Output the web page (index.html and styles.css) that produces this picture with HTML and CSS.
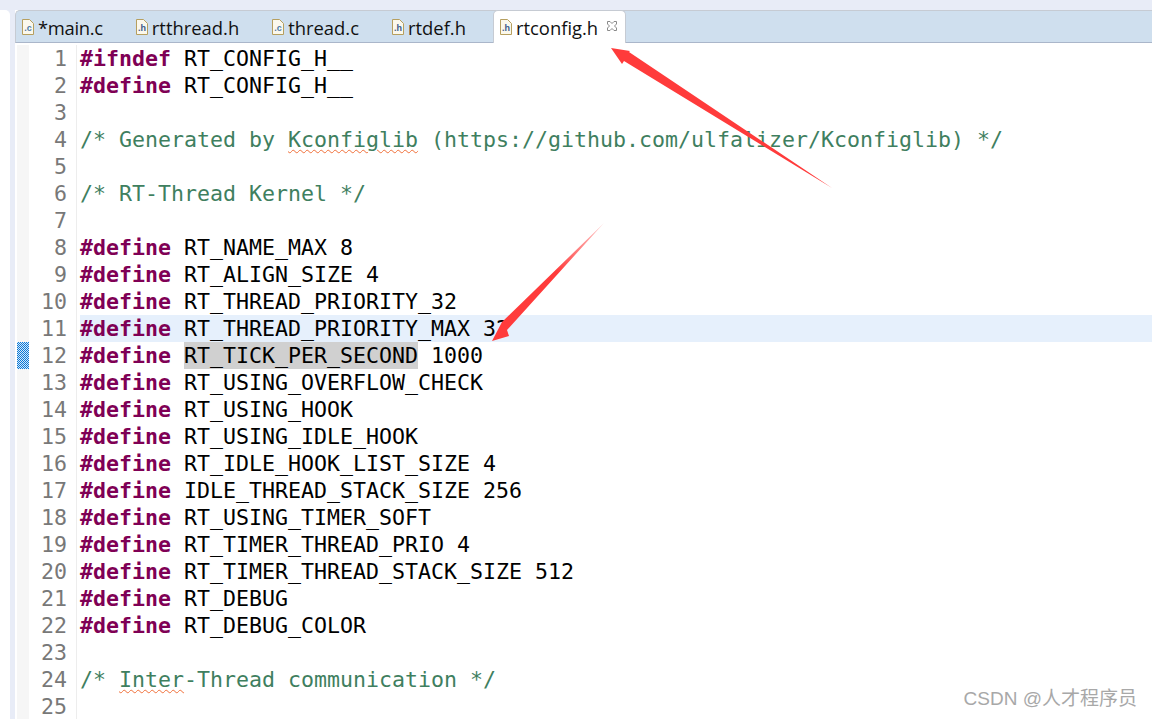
FILE: index.html
```html
<!DOCTYPE html>
<html lang="en">
<head>
<meta charset="utf-8">
<title>rtconfig.h</title>
<link rel="stylesheet" href="styles.css">
</head>
<body>
<div class="window">
  <div class="topstrip"></div>
  <div class="workspace">
    <div class="sidepane"></div>
    <div class="editor">
      <div class="tabbar">
        <div class="tab"><svg class="fileicon" viewBox="0 0 12 16"><path class="page" d="M.5.5h7l4 4v11H.5z"/><text class="c" x="6" y="12">.c</text></svg><span class="tight">*main.c</span></div>
        <div class="tab"><svg class="fileicon" viewBox="0 0 12 16"><path class="page" d="M.5.5h7l4 4v11H.5z"/><text class="h" x="6" y="12">.h</text></svg><span>rtthread.h</span></div>
        <div class="tab"><svg class="fileicon" viewBox="0 0 12 16"><path class="page" d="M.5.5h7l4 4v11H.5z"/><text class="c" x="6" y="12">.c</text></svg><span>thread.c</span></div>
        <div class="tab"><svg class="fileicon" viewBox="0 0 12 16"><path class="page" d="M.5.5h7l4 4v11H.5z"/><text class="h" x="6" y="12">.h</text></svg><span>rtdef.h</span></div>
        <div class="tab active"><svg class="fileicon" viewBox="0 0 12 16"><path class="page" d="M.5.5h7l4 4v11H.5z"/><text class="h" x="6" y="12">.h</text></svg><span>rtconfig.h</span><svg class="close" viewBox="0 0 12 12"><path d="M1.5 1.5h2.500l2 2 2-2h2.500v2.500l-2 2 2 2v2.500h-2.500l-2-2-2 2H1.500V8l2-2-2-2z"/></svg></div>
      </div>
      <div class="code">
        <div class="row"><span class="mark"></span><span class="ln">1</span><span class="src"><b>#ifndef</b> RT_CONFIG_H__</span></div>
        <div class="row"><span class="mark"></span><span class="ln">2</span><span class="src"><b>#define</b> RT_CONFIG_H__</span></div>
        <div class="row"><span class="mark"></span><span class="ln">3</span><span class="src"></span></div>
        <div class="row"><span class="mark"></span><span class="ln">4</span><span class="src"><i>/* Generated by <u class="spell">Kconfiglib</u> (https://github.com/ulfalizer/Kconfiglib) */</i></span></div>
        <div class="row"><span class="mark"></span><span class="ln">5</span><span class="src"></span></div>
        <div class="row"><span class="mark"></span><span class="ln">6</span><span class="src"><i>/* RT-Thread Kernel */</i></span></div>
        <div class="row"><span class="mark"></span><span class="ln">7</span><span class="src"></span></div>
        <div class="row"><span class="mark"></span><span class="ln">8</span><span class="src"><b>#define</b> RT_NAME_MAX 8</span></div>
        <div class="row"><span class="mark"></span><span class="ln">9</span><span class="src"><b>#define</b> RT_ALIGN_SIZE 4</span></div>
        <div class="row"><span class="mark"></span><span class="ln">10</span><span class="src"><b>#define</b> RT_THREAD_PRIORITY_32</span></div>
        <div class="row"><span class="mark"></span><span class="ln">11</span><span class="src current"><b>#define</b> RT_THREAD_PRIORITY_MAX 32</span></div>
        <div class="row"><span class="mark hit"></span><span class="ln">12</span><span class="src"><b>#define</b> <span class="sel">RT_TICK_PER_SECOND</span> 1000</span></div>
        <div class="row"><span class="mark"></span><span class="ln">13</span><span class="src"><b>#define</b> RT_USING_OVERFLOW_CHECK</span></div>
        <div class="row"><span class="mark"></span><span class="ln">14</span><span class="src"><b>#define</b> RT_USING_HOOK</span></div>
        <div class="row"><span class="mark"></span><span class="ln">15</span><span class="src"><b>#define</b> RT_USING_IDLE_HOOK</span></div>
        <div class="row"><span class="mark"></span><span class="ln">16</span><span class="src"><b>#define</b> RT_IDLE_HOOK_LIST_SIZE 4</span></div>
        <div class="row"><span class="mark"></span><span class="ln">17</span><span class="src"><b>#define</b> IDLE_THREAD_STACK_SIZE 256</span></div>
        <div class="row"><span class="mark"></span><span class="ln">18</span><span class="src"><b>#define</b> RT_USING_TIMER_SOFT</span></div>
        <div class="row"><span class="mark"></span><span class="ln">19</span><span class="src"><b>#define</b> RT_TIMER_THREAD_PRIO 4</span></div>
        <div class="row"><span class="mark"></span><span class="ln">20</span><span class="src"><b>#define</b> RT_TIMER_THREAD_STACK_SIZE 512</span></div>
        <div class="row"><span class="mark"></span><span class="ln">21</span><span class="src"><b>#define</b> RT_DEBUG</span></div>
        <div class="row"><span class="mark"></span><span class="ln">22</span><span class="src"><b>#define</b> RT_DEBUG_COLOR</span></div>
        <div class="row"><span class="mark"></span><span class="ln">23</span><span class="src"></span></div>
        <div class="row"><span class="mark"></span><span class="ln">24</span><span class="src"><i>/* <u class="spell">Inter</u>-Thread communication */</i></span></div>
        <div class="row"><span class="mark"></span><span class="ln">25</span><span class="src"></span></div>
      </div>
    </div>
  </div>
  <svg class="arrows" viewBox="0 0 1152 719">
    <defs>
      <linearGradient id="fade" x1="604" y1="223" x2="560" y2="275" gradientUnits="userSpaceOnUse">
        <stop offset="0" stop-color="#ff3b3b" stop-opacity=".25"/>
        <stop offset="1" stop-color="#ff3b3b"/>
      </linearGradient>
    </defs>
    <path class="arrow" d="M611 48L630 51L629 52L832 188L624 61L622 64Z"/>
    <path class="arrow2" d="M492 341L509 336L507 330L604 223L502 322Z"/>
  </svg>
  <div class="watermark">CSDN @人才程序员</div>
</div>
</body>
</html>
```
FILE: styles.css
```css
* { box-sizing: border-box; }
html, body { margin: 0; padding: 0; width: 1152px; height: 719px; overflow: hidden; background: #fff; }
.window { position: relative; width: 1152px; height: 719px; display: flex; flex-direction: column; background: #e8ecf7; overflow: hidden; }
.topstrip { height: 10px; flex: none; }
.workspace { flex: 1; display: flex; min-height: 0; }
.sidepane { width: 10px; flex: none; background: #fff; border-top-right-radius: 5px; }
.editor { flex: 1; margin-left: 5px; min-width: 0; display: flex; flex-direction: column; background: #fff; }
.tabbar { height: 33px; flex: none; display: flex; background: #cfdfee; border-top: 1px solid #c6cbd3; border-bottom: 1px solid #aab6ca; border-left: 1px solid #c6cbd3; border-top-left-radius: 5px; font-family: "Open Sans", "Liberation Sans", sans-serif; font-size: 18.4px; color: #111; }
.tab { display: flex; align-items: center; height: 32px; padding: 0 27px 0 6px; gap: 4px; white-space: nowrap; }
.tight { letter-spacing: -0.3px; }
.tab.active { background: #fff; margin-left: 0; padding: 0 7px 0 6px; border: 1px solid #c6cbd3; border-bottom: 0; border-radius: 5px 5px 0 0; margin-top: -1px; height: 33px; }
.tab.active .close { margin-left: 4px; }
.fileicon { width: 12px; height: 16px; flex: none; }
.page { fill: #fbf8ec; stroke: #b69f5f; stroke-width: 1; }
.fileicon text { font-family: "Liberation Sans", sans-serif; font-size: 9px; font-weight: 700; text-anchor: middle; }
.fileicon .c { fill: #4d7aa8; }
.fileicon .h { fill: #3c5a8c; }
.close { width: 12px; height: 12px; flex: none; margin-bottom: 3px; }
.close path { fill: #fff; stroke: #8a8a8a; stroke-width: 1; }
.code { flex: 1; min-height: 0; padding-top: 2px; font-family: "DejaVu Sans Mono", monospace; font-size: 21.6px; line-height: 27px; color: #000; }
.row { display: flex; height: 27px; }
.mark { width: 12px; margin-left: 2px; flex: none; background: #f6f6f6; }
.mark.hit { background: conic-gradient(#0a78d8 25%, #d5e8f8 0 50%, #0a78d8 0 75%, #d5e8f8 0) 0 0 / 2px 2px; }
.ln { width: 48px; flex: none; padding-right: 9px; text-align: right; color: #787878; border-right: 1px solid #ededed; background: #fff; }
.src { flex: 1; padding-left: 3px; white-space: pre; }
.src.current { margin-left: 3px; padding-left: 0; background: #e6f0fc; }
.src b { color: #7f0055; font-weight: 700; }
.src i { color: #3f7f5f; font-style: normal; }
.sel { background: #d0d0d0; display: inline-block; height: 27px; }
.spell { text-decoration: underline wavy #f0703a 1px; text-underline-offset: 2px; }
.arrows { position: absolute; left: 0; top: 0; width: 1152px; height: 719px; pointer-events: none; }
.arrow { fill: #ff3b3b; }
.arrow2 { fill: url(#fade); }
.watermark { position: absolute; right: 15px; top: 687px; font-family: "Liberation Sans", "Noto Sans CJK SC", sans-serif; font-size: 19px; font-weight: 400; line-height: 24px; color: #a8a8a8; white-space: nowrap; }
```
